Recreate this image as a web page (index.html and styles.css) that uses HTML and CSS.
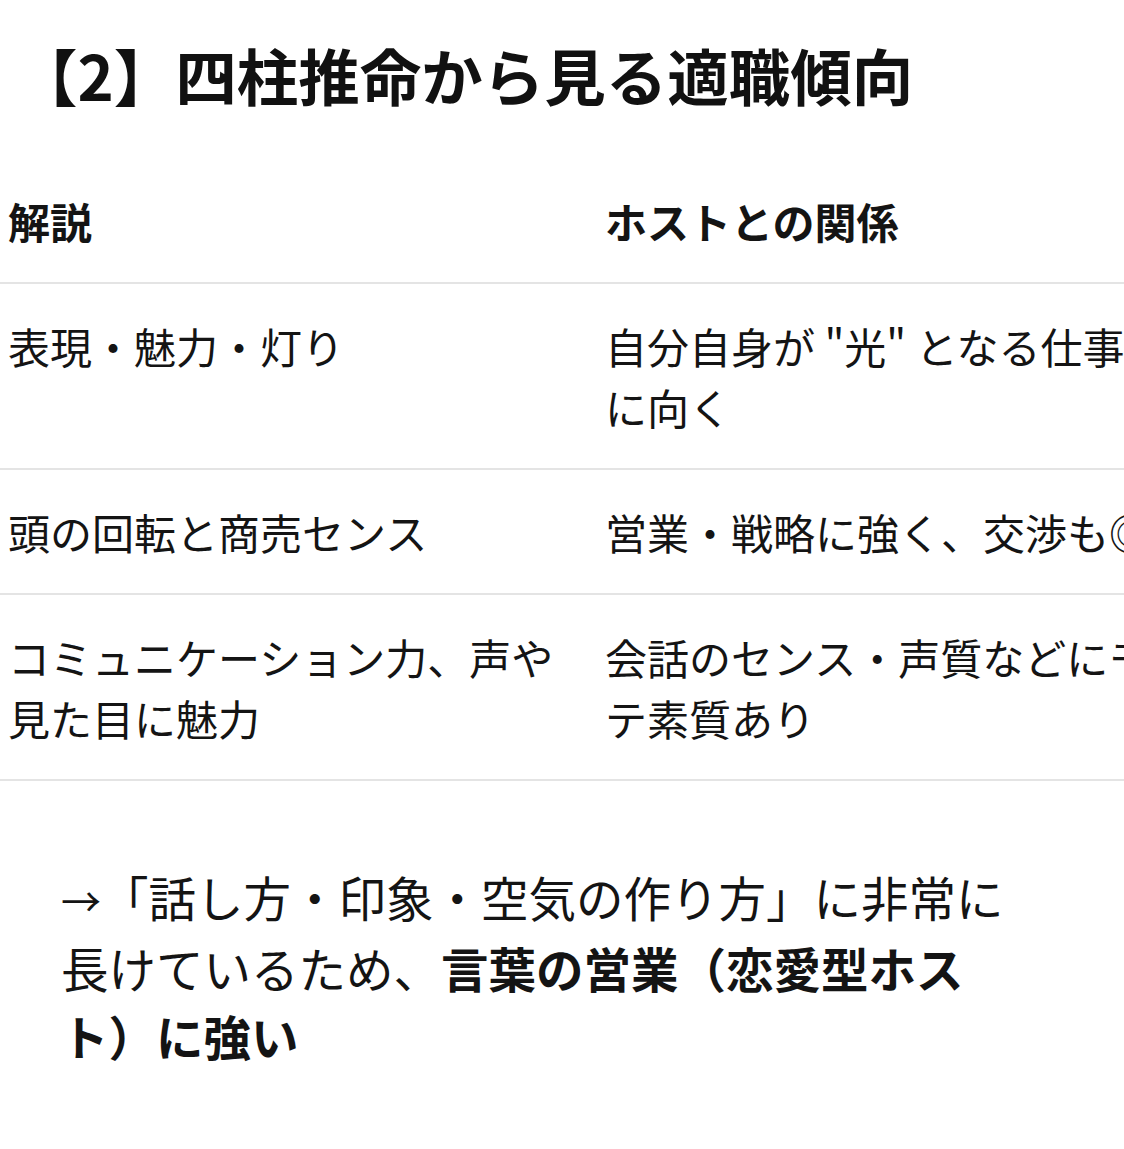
FILE: index.html
```html
<!DOCTYPE html>
<html lang="ja">
<head>
<meta charset="utf-8">
<title>四柱推命から見る適職傾向</title>
<link rel="stylesheet" href="styles.css">
</head>
<body>
<main class="page">
  <h1 class="title">【2】四柱推命から見る適職傾向</h1>
  <div class="table-wrap">
    <table class="fit-table">
      <colgroup><col class="c1"><col class="c2"></colgroup>
      <thead>
        <tr><th>解説</th><th>ホストとの関係</th></tr>
      </thead>
      <tbody>
        <tr><td>表現・魅力・灯り</td><td>自分自身が "光" となる仕事に向く</td></tr>
        <tr><td>頭の回転と商売センス</td><td>営業・戦略に強く、交渉も◎</td></tr>
        <tr><td>コミュニケーション力、声や見た目に魅力</td><td>会話のセンス・声質などにモテ素質あり</td></tr>
      </tbody>
    </table>
  </div>
  <p class="summary"><span class="arrow">→</span>「話し方・印象・空気の作り方」に非常に長けているため、<strong>言葉の営業（恋愛型ホスト）に強い</strong></p>
</main>
</body>
</html>
```

FILE: styles.css
```css
html, body {
  margin: 0;
  padding: 0;
  background: #ffffff;
}
body {
  font-family: "Noto Sans CJK JP", "Noto Sans", sans-serif;
  color: #141414;
  overflow: hidden;
}
.page {
  width: 1124px;
  overflow: hidden;
}
.title {
  margin: 30px 0 0;
  padding-left: 16px;
  font-size: 61.5px;
  line-height: 90px;
  font-weight: 700;
  color: #111111;
  white-space: nowrap;
}
.table-wrap {
  margin-top: 39px;
  width: 1124px;
  overflow: hidden;
}
.fit-table {
  table-layout: fixed;
  width: 1196px;
  border-collapse: collapse;
  font-size: 42px;
  line-height: 61px;
}
.fit-table col.c1 {
  width: 597px;
}
.fit-table col.c2 {
  width: 599px;
}
.fit-table th,
.fit-table td {
  text-align: left;
  vertical-align: top;
  padding: 31px 41px 31px 8px;
  border-bottom: 2px solid #e4e4e4;
}
.fit-table th {
  font-weight: 700;
}
.fit-table td {
  font-weight: 400;
}
.summary {
  margin: 82px 0 0 61px;
  width: 945px;
  font-size: 47.5px;
  line-height: 68px;
  color: #141414;
}
.summary strong {
  font-weight: 700;
}
.arrow {
  font-size: 40px;
}
```
